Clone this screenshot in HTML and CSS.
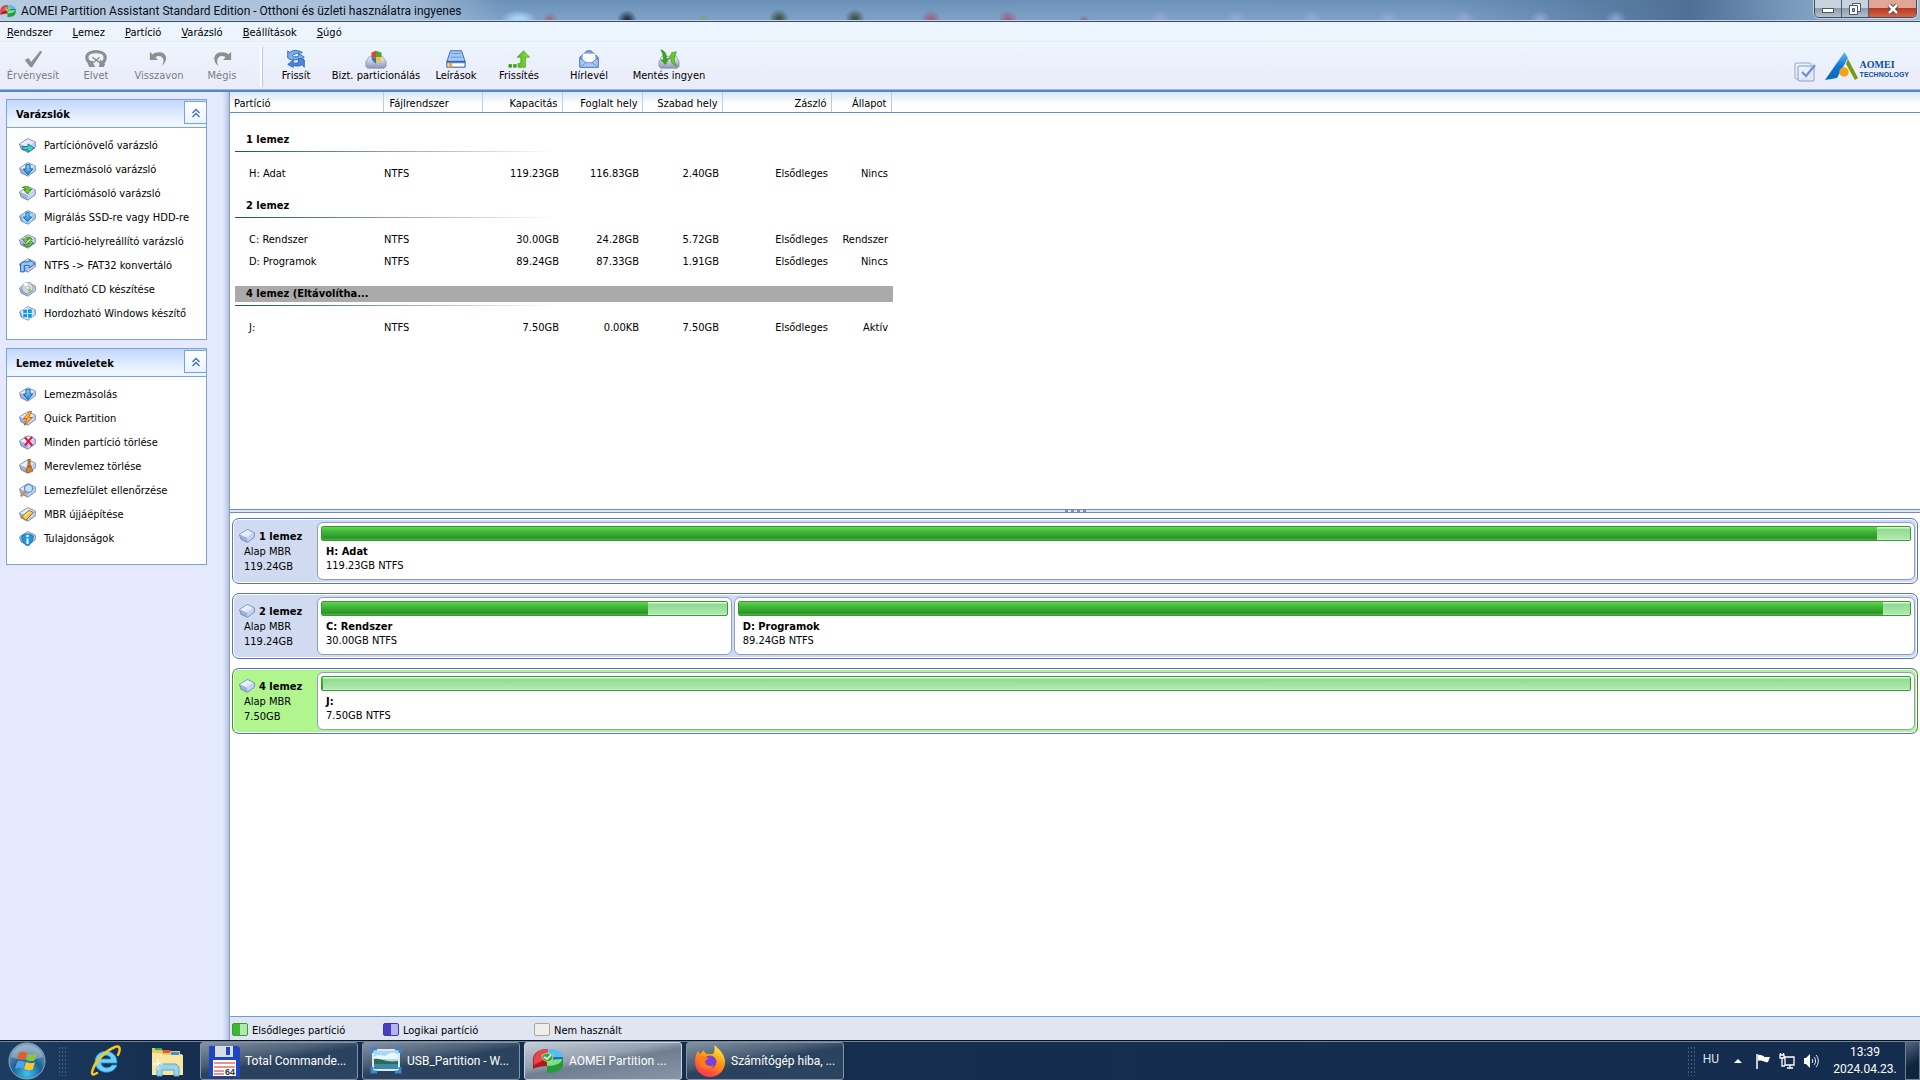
FILE: index.html
```html
<!DOCTYPE html>
<html lang="hu">
<head>
    <meta charset="UTF-8">
    <meta name="viewport" content="width=device-width, initial-scale=1.0">
    <title>AOMEI Partition Assistant Standard Edition</title>
    <link rel="stylesheet" href="styles.css">
</head>
<body>
    <!-- shared icon shapes -->
    <svg class="defs" aria-hidden="true">
        <defs>
            <linearGradient id="diskTop" x1="0" y1="0" x2="1" y2="1">
                <stop offset="0" stop-color="#ffffff"/>
                <stop offset="1" stop-color="#cddaf5"/>
            </linearGradient>
            <linearGradient id="blueArrow" x1="0" y1="0" x2="0" y2="1">
                <stop offset="0" stop-color="#8fd8ff"/>
                <stop offset="1" stop-color="#1a7fd0"/>
            </linearGradient>
            <linearGradient id="greenArrow" x1="0" y1="0" x2="1" y2="0">
                <stop offset="0" stop-color="#1e9a14"/>
                <stop offset="1" stop-color="#9be23c"/>
            </linearGradient>
            <linearGradient id="driveBox" x1="0" y1="0" x2="0" y2="1">
                <stop offset="0" stop-color="#eef0fa"/>
                <stop offset="1" stop-color="#8f96b8"/>
            </linearGradient>
            <radialGradient id="orb" cx=".5" cy=".85" r=".8">
                <stop offset="0" stop-color="#3fc4f0"/>
                <stop offset=".5" stop-color="#1b6196"/>
                <stop offset="1" stop-color="#7f9db5"/>
            </radialGradient>
            <linearGradient id="foxBody" x1=".8" y1="0" x2=".3" y2="1">
                <stop offset="0" stop-color="#fff44f"/>
                <stop offset=".45" stop-color="#ff980e"/>
                <stop offset="1" stop-color="#ff2d5a"/>
            </linearGradient>
            <linearGradient id="logoBlue" x1="0" y1="0" x2="0" y2="1">
                <stop offset="0" stop-color="#6bb8f2"/>
                <stop offset=".5" stop-color="#0a78d6"/>
                <stop offset="1" stop-color="#0868c4"/>
            </linearGradient>
            <symbol id="disk" viewBox="0 0 16 14">
                <path d="M.5 5.500 8.500.6l6.800 3.200v4.400L8.300 13.300 2 10.200z" fill="#9fb2dc" stroke="#6f84b8" stroke-width=".9" stroke-linejoin="round"/>
                <path d="M1 5.600 8.500 1.100l6.300 2.900-6.600 4.700z" fill="url(#diskTop)"/>
                <path d="M8.200 9v3.800l6.600-4.800V4.300z" fill="#c5d5f3"/>
            </symbol>
            <symbol id="pie" viewBox="0 0 32 26">
                <path d="M16 10v8C6 18 1 21 1 21V11C2 3 10 1 16 1z" fill="#b3161b"/>
                <path d="M16 10 2 17C0 7 6 1 16 1z" fill="#e8474b"/>
                <path d="M17 9V1c9 0 14 4 14 8 0 2-1 3-2 4z" fill="#4fc0f0"/>
                <path d="M31 9v7l-14-6v-1z" fill="#1c6fb5"/>
                <path d="M15 13v12c9 0 16-3 16-8v-6c-2 2-6 3-9 3z" fill="#249a3c"/>
                <path d="m15 12 15-1c0 4-6 7-15 7z" fill="#7ede84"/>
                <path d="m10 7 5-2 6 2c0 5-2 6-5 7-4-1-6-3-6-7z" fill="#3aa53a" stroke="#d5efc9" stroke-width=".7"/>
                <path d="m12 9 3 2 4-4" fill="none" stroke="#fff" stroke-width="1.700"/>
            </symbol>
            <symbol id="downArrow" viewBox="0 0 16 14">
                <use href="#disk" width="16" height="14"/>
                <path d="M6.500 2.500h4v4H13L8.500 12 4 6.500h2.500z" fill="url(#blueArrow)" stroke="#0f5fa5" stroke-width=".9"/>
            </symbol>
        </defs>
    </svg>

    <header class="titlebar">
        <svg class="title-icon" viewBox="0 0 32 26"><use href="#pie"/></svg>
        <h1>AOMEI Partition Assistant Standard Edition - Otthoni és üzleti használatra ingyenes</h1>
        <div class="window-buttons">
            <button class="wb" aria-label="Kis méret"><svg width="14" height="12" viewBox="0 0 14 12"><rect x="1.500" y="5.500" width="11" height="4" fill="#fff" stroke="#4a5568"/></svg></button>
            <button class="wb" aria-label="Előző méret"><svg width="14" height="12" viewBox="0 0 14 12"><path d="M4.500.5h8v8h-8z" fill="#fff" stroke="#4a5568"/><path d="M1.500 2.500h8v9h-8z" fill="#fff" stroke="#4a5568"/><path d="M4.500 5.500h2v3h-2z" fill="#9ab" stroke="#4a5568"/></svg></button>
            <button class="wb close" aria-label="Bezárás"><svg width="14" height="12" viewBox="0 0 14 12"><path d="m3 2 8 8m0-8-8 8" stroke="#4a3038" stroke-width="4.500"/><path d="m3 2 8 8m0-8-8 8" stroke="#fff" stroke-width="2.600"/></svg></button>
        </div>
    </header>

    <nav class="menubar">
        <button><u>R</u>endszer</button>
        <button><u>L</u>emez</button>
        <button><u>P</u>artíció</button>
        <button><u>V</u>arázsló</button>
        <button><u>B</u>eállítások</button>
        <button><u>S</u>úgó</button>
    </nav>

    <div class="toolbar">
        <button class="tool" disabled><svg viewBox="0 0 24 20"><path d="m3 11 4-2 3 4L20 1l2 1-11 17H9z" fill="#8f8f8f"/></svg>Érvényesít</button>
        <button class="tool narrow" disabled><svg viewBox="0 0 24 20"><path d="M9 14C3 14 2 11 2 8c0-4 5-6 10-6s10 2 10 6c0 3-1 6-5 6" fill="none" stroke="#8f8f8f" stroke-width="3.500"/><path d="M3 12 5 18h5l-2-3zM17 12l4 4-1 2h-4zM8 8l8 6m-7 0 7-6" fill="#8f8f8f" stroke="#8f8f8f" stroke-width="1.500"/></svg>Elvet</button>
        <button class="tool" disabled><svg viewBox="0 0 24 20"><path d="M2 2v9h9L8 8c6-4 12 1 7 10 9-8 4-17-5-15-2 0-4 1-5 2z" fill="#8f8f8f"/></svg>Visszavon</button>
        <button class="tool narrow" disabled><svg viewBox="0 0 24 20"><path d="M22 2v9h-9l3-3C10 4 4 9 8 18-1 10 5 1 14 3c2 0 4 1 5 2z" fill="#8f8f8f"/></svg>Mégis</button>
        <span class="tool-sep"></span>
        <button class="tool"><svg viewBox="0 0 24 20"><path d="M3 1v8c2 2 8 3 12 1v3l6-5-6-4v3c-3 1-6 1-7-1 2-2 6-2 11-3C14 0 8 0 5 3z" fill="#79aef0" stroke="#2c63bb"/><path d="M21 19v-8c-2-2-5-2-7-1l1 3c1 1-4 2-6 1v-3l-6 5 6 3v-2c4 1 8 1 10-1z" fill="#4a86de" stroke="#2c63bb"/></svg>Frissít</button>
        <button class="tool wide"><svg viewBox="0 0 24 20"><path d="M5 7h14l4 6v5l-2 2H3l-2-2v-5z" fill="url(#driveBox)" stroke="#7b84aa" stroke-width=".7"/><path d="M12 1 7 3v5h5z" fill="#e0452c"/><path d="m12 1 6 2v5h-6z" fill="#55a630"/><path d="M7 8h5v7C9 13 7 11 7 8z" fill="#2f74d0"/><path d="M12 8h6c0 3-3 6-6 7z" fill="#fbc02d"/></svg>Bizt. particionálás</button>
        <button class="tool"><svg viewBox="0 0 24 20"><path d="M6 1h12l4 12v6H2v-6z" fill="#a9c9f5" stroke="#2f62b5"/><path d="M7 4h10M6 8h12" stroke="#5b8fe0"/><path d="M2 13h20" stroke="#2f62b5" stroke-width="2"/><path d="M3 15h18v3H3z" fill="#fff"/><path d="M4 14h4v6l-2-2-2 2z" fill="#f4a52a"/></svg>Leírások</button>
        <button class="tool narrow"><svg viewBox="0 0 24 20"><path d="M1 16h3v3H1zM6 16h3v3H6zM11 15h3V8h-4l7-7 6.500 7H19v11h-8z" fill="url(#greenArrow)" stroke="#3d9f1c" stroke-width=".8"/></svg>Frissítés</button>
        <button class="tool mid"><svg viewBox="0 0 24 20"><path d="M2 8 10 1h4l8 7v11H2z" fill="#7ba5e2" stroke="#4a72b8"/><path d="M5 4h14v8l-7 4-7-4z" fill="#fff" stroke="#9bb4dc" stroke-width=".7"/><path d="m2 9 7 5h6l7-5v10H2z" fill="#a9c9f5" stroke="#4a72b8" stroke-width=".8"/><path d="m3 18 6-4m12 4-6-4" stroke="#6590d0"/></svg>Hírlevél</button>
        <button class="tool mid"><svg viewBox="0 0 24 20"><path d="M4 7h16l3 6v5l-2 2H3l-2-2v-5z" fill="url(#driveBox)" stroke="#8087a5" stroke-width=".7"/><path d="M3 0c5 1 7 6 6 10l3-1-4 7-5-5h3C6 7 5 3 3 0z" fill="#35a818" stroke="#237d10" stroke-width=".5"/><path d="M21 18c-6-2-7-5-7-9l-2 1 3-7 5-1-1 4c-2 4-1 9 2 12z" fill="#68c726" stroke="#237d10" stroke-width=".5"/></svg>Mentés ingyen</button>
        <div class="brand">
            <svg class="brand-check" viewBox="0 0 22 20"><rect x="1" y="1" width="16" height="16" rx="2" fill="none" stroke="#b0bfe2" stroke-width="1.500"/><rect x="4" y="4" width="16" height="15" rx="2" fill="#e9effa" fill-opacity=".7" stroke="#a5b6df" stroke-width="1.500"/><path d="m8 10 4 4 9-11" fill="none" stroke="#6f8fdb" stroke-width="2.200"/></svg>
            <svg class="brand-mark" viewBox="0 0 34 28"><path d="M20.500 0 24 6 13 26l-12 2z" fill="url(#logoBlue)"/><path d="m24 7 10 19-3 2L22 12z" fill="#749c0a"/><circle cx="20" cy="20" r="4.700" fill="#f9a30a"/></svg>
            <p class="brand-name"><b>AOMEI</b><span>TECHNOLOGY</span></p>
        </div>
    </div>

    <div class="workspace">
        <aside class="sidebar">
            <section class="box">
                <header class="box-head">
                    <h2>Varázslók</h2>
                    <button class="fold" aria-label="Összecsukás"><svg width="10" height="10" viewBox="0 0 10 10"><path d="m1.500 5 3.500-3.500L8.500 5m-7 4L5 5.500 8.500 9" fill="none" stroke="#3d6ea5" stroke-width="1.300"/></svg></button>
                </header>
                <div class="box-body">
                    <button class="task"><svg viewBox="0 0 16 14"><use href="#disk"/><path d="M3.500 8h5V5.500l6 4-6 4V11h-5z" fill="#35dcb0" stroke="#1c57a8" stroke-width=".8"/></svg>Partíciónövelő varázsló</button>
                    <button class="task"><svg viewBox="0 0 16 14"><use href="#downArrow"/></svg>Lemezmásoló varázsló</button>
                    <button class="task"><svg viewBox="0 0 16 14"><use href="#disk"/><path d="M3 1.500C6-.5 9 0 9.500 3H12L8 7.500 4.500 3.500h2C6.500 2 5 1.500 3 1.500z" fill="#6fd01c" stroke="#237d10" stroke-width=".8"/></svg>Partíciómásoló varázsló</button>
                    <button class="task"><svg viewBox="0 0 16 14"><use href="#disk"/><circle cx="8" cy="7" r="5.500" fill="#b8daf5" stroke="#6d9ccc" stroke-width=".7"/><path d="M6.500 2.500h3v4H12L8 11 4 6.500h2.500z" fill="url(#blueArrow)" stroke="#0f5fa5" stroke-width=".8"/></svg>Migrálás SSD-re vagy HDD-re</button>
                    <button class="task"><svg viewBox="0 0 16 14"><use href="#disk"/><path d="M12.500 5C10 1.500 6 2.500 5 5H3l3.500 3L9 5H7.500C8.500 4 10 4.500 12.500 5zM4 9.500c2 3.500 7 3 8-.5h2L11 6 8 9h2c-1 1.500-3 1.500-6 .5z" fill="#7ccd3a" stroke="#2e7d14" stroke-width=".8"/></svg>Partíció-helyreállító varázsló</button>
                    <button class="task"><svg viewBox="0 0 16 14"><use href="#disk"/><path d="M1.500 13V5.500L4 3.500h5.500V1.500L15 5.500l-5.500 4V7H5v6z" fill="#8dc8f5" stroke="#1c62ae" stroke-width=".9"/></svg>NTFS -&gt; FAT32 konvertáló</button>
                    <button class="task"><svg viewBox="0 0 16 14"><use href="#disk"/><circle cx="8" cy="5.500" r="5.300" fill="#d6d8d6" stroke="#8d9299" stroke-width=".8"/><path d="M8 5.500 4 1.500A5 5 0 0 1 8 .5z" fill="#fff"/><path d="m8 5.500 4.500 2.500a5 5 0 0 1-3 2.500z" fill="#8cbf8c"/><circle cx="8" cy="5.500" r="1.500" fill="#fff" stroke="#999" stroke-width=".6"/></svg>Indítható CD készítése</button>
                    <button class="task"><svg viewBox="0 0 16 14"><use href="#disk"/><circle cx="8" cy="7" r="5.500" fill="#cfeafc"/><path d="M4 3.500h3.500v3H4zM8.500 3H12v3.500H8.500zM4 7.500h3.500v3H4zM8.500 7.500H12V11H8.500z" fill="#0a9be8"/></svg>Hordozható Windows készítő</button>
                </div>
            </section>

            <section class="box">
                <header class="box-head">
                    <h2>Lemez műveletek</h2>
                    <button class="fold" aria-label="Összecsukás"><svg width="10" height="10" viewBox="0 0 10 10"><path d="m1.500 5 3.500-3.500L8.500 5m-7 4L5 5.500 8.500 9" fill="none" stroke="#3d6ea5" stroke-width="1.300"/></svg></button>
                </header>
                <div class="box-body">
                    <button class="task"><svg viewBox="0 0 16 14"><use href="#downArrow"/></svg>Lemezmásolás</button>
                    <button class="task"><svg viewBox="0 0 16 14"><use href="#disk"/><path d="M10.500 0 4 7h3.500L5 13.500 12.500 6H9l3-6z" fill="#ffc02e" stroke="#d2560c" stroke-width=".9"/></svg>Quick Partition</button>
                    <button class="task"><svg viewBox="0 0 16 14"><use href="#disk"/><path d="m5.500 2 7 8m0-8.500-7 8.500" stroke="#e3163c" stroke-width="2"/></svg>Minden partíció törlése</button>
                    <button class="task"><svg viewBox="0 0 16 14"><use href="#disk"/><path d="M8.500 0h2v5l2.500 6.500-5 1.500-1.500-2.500 2-5z" fill="#c9882e" stroke="#8d5312" stroke-width=".7"/><path d="m8 7.500 3.500-1" stroke="#d8402a" stroke-width="1.300"/></svg>Merevlemez törlése</button>
                    <button class="task"><svg viewBox="0 0 16 14"><use href="#disk"/><path d="M6.500 7.500 1.500 12.500" stroke="#e08a2c" stroke-width="2.200"/><circle cx="9" cy="5" r="3.800" fill="#bfe3fb" stroke="#5b8fd0" stroke-width="1.200"/></svg>Lemezfelület ellenőrzése</button>
                    <button class="task"><svg viewBox="0 0 16 14"><use href="#disk"/><path d="m2.500 9 7-6 4 2-7 7.500z" fill="#f6c945" stroke="#97660f" stroke-width=".9"/><path d="m5 8.500 5-4" stroke="#fff0a8"/></svg>MBR újjáépítése</button>
                    <button class="task"><svg viewBox="0 0 16 14"><use href="#disk"/><path d="M2.500 4.500C5 2 11 2 13.500 4.500c0 5-2 8-5.500 9.500-3.500-1.500-5.500-4.500-5.500-9.500z" fill="#2196dc" stroke="#1168b0" stroke-width=".7"/><path d="M8 7v5" stroke="#fff" stroke-width="2"/><circle cx="8" cy="4.700" r="1.200" fill="#fff"/></svg>Tulajdonságok</button>
                </div>
            </section>
        </aside>

        <main class="content">
            <div class="list-pane">
                <table class="partitions">
                    <colgroup>
                        <col class="c-name"><col class="c-fs"><col class="c-size"><col class="c-size"><col class="c-size"><col class="c-flag"><col class="c-state"><col>
                    </colgroup>
                    <thead>
                        <tr><th>Partíció</th><th>Fájlrendszer</th><th class="num">Kapacitás</th><th class="num">Foglalt hely</th><th class="num">Szabad hely</th><th class="num">Zászló</th><th class="num">Állapot</th><th></th></tr>
                    </thead>
                    <tbody>
                        <tr class="group"><td colspan="7"><div>1 lemez</div></td><td></td></tr>
                        <tr><td>H: Adat</td><td>NTFS</td><td class="num">119.23GB</td><td class="num">116.83GB</td><td class="num">2.40GB</td><td class="num">Elsődleges</td><td class="num">Nincs</td><td></td></tr>
                        <tr class="group"><td colspan="7"><div>2 lemez</div></td><td></td></tr>
                        <tr><td>C: Rendszer</td><td>NTFS</td><td class="num">30.00GB</td><td class="num">24.28GB</td><td class="num">5.72GB</td><td class="num">Elsődleges</td><td class="num">Rendszer</td><td></td></tr>
                        <tr><td>D: Programok</td><td>NTFS</td><td class="num">89.24GB</td><td class="num">87.33GB</td><td class="num">1.91GB</td><td class="num">Elsődleges</td><td class="num">Nincs</td><td></td></tr>
                        <tr class="group selected"><td colspan="7"><div>4 lemez (Eltávolítha...</div></td><td></td></tr>
                        <tr><td>J:</td><td>NTFS</td><td class="num">7.50GB</td><td class="num">0.00KB</td><td class="num">7.50GB</td><td class="num">Elsődleges</td><td class="num">Aktív</td><td></td></tr>
                    </tbody>
                </table>
            </div>

            <div class="splitter"><i></i><i></i><i></i><i></i></div>

            <div class="disk-map">
                <section class="disk">
                    <div class="disk-info">
                        <h3><svg viewBox="0 0 16 14"><use href="#disk"/></svg>1 lemez</h3>
                        <p>Alap MBR</p>
                        <p>119.24GB</p>
                    </div>
                    <div class="part" style="flex-grow: 100">
                        <div class="bar"><div class="used" style="width: 97.900%"></div></div>
                        <h4>H: Adat</h4>
                        <p>119.23GB NTFS</p>
                    </div>
                </section>
                <section class="disk">
                    <div class="disk-info">
                        <h3><svg viewBox="0 0 16 14"><use href="#disk"/></svg>2 lemez</h3>
                        <p>Alap MBR</p>
                        <p>119.24GB</p>
                    </div>
                    <div class="part" style="flex-grow: 26">
                        <div class="bar"><div class="used" style="width: 80.500%"></div></div>
                        <h4>C: Rendszer</h4>
                        <p>30.00GB NTFS</p>
                    </div>
                    <div class="part" style="flex-grow: 75">
                        <div class="bar"><div class="used" style="width: 97.700%"></div></div>
                        <h4>D: Programok</h4>
                        <p>89.24GB NTFS</p>
                    </div>
                </section>
                <section class="disk active">
                    <div class="disk-info">
                        <h3><svg viewBox="0 0 16 14"><use href="#disk"/></svg>4 lemez</h3>
                        <p>Alap MBR</p>
                        <p>7.50GB</p>
                    </div>
                    <div class="part" style="flex-grow: 100">
                        <div class="bar"><div class="used" style="width: 1px"></div></div>
                        <h4>J:</h4>
                        <p>7.50GB NTFS</p>
                    </div>
                </section>
            </div>

            <footer class="legend">
                <span><i class="sw primary"></i>Elsődleges partíció</span>
                <span><i class="sw logical"></i>Logikai partíció</span>
                <span><i class="sw unused"></i>Nem használt</span>
            </footer>
        </main>
    </div>

    <footer class="taskbar">
        <button class="start" aria-label="Start">
            <svg viewBox="0 0 38 38"><circle cx="19" cy="19" r="18" fill="url(#orb)" stroke="#8ba9be"/><path d="M3 15C7-1 31-1 35 15c-10 4-22 4-32 0z" fill="#dce8f0" opacity=".35"/><path d="M11 11c3-2 6-1 8 0l-2 7c-3-1-5-2-8 0z" fill="#ee5a24"/><path d="M20 12c3 1 6 1 9-1l-2 7c-3 2-6 1-9 0z" fill="#8cc63e"/><path d="M9 20c3-2 5-1 8 0l-2 7c-2-1-5-2-8 0z" fill="#4aa5e8"/><path d="M18 20c3 1 6 2 9 0l-2 7c-3 2-6 1-9 0z" fill="#fdc52e"/></svg>
        </button>
        <span class="grip"></span>
        <button class="pinned" aria-label="Internet Explorer">
            <svg viewBox="0 0 32 32"><path d="M27 18H11c1 6 9 6 11 2h5c-4 11-21 9-22-3C5 3 27 2 27 18zm-6-4c-1-5-9-5-10 0z" fill="#6fd0fa" stroke="#2795da" stroke-width=".8" fill-rule="evenodd"/><path d="M7 28c-5 3-6 1-4-4C6 15 17 5 25 2c5-2 6 2 3 8" fill="none" stroke="#f8c81c" stroke-width="2.500" stroke-linecap="round"/></svg>
        </button>
        <button class="pinned" aria-label="Intéző">
            <svg viewBox="0 0 32 32"><path d="M1 3h9l2 3h17v3h2v21H1z" fill="#e6c765"/><path d="M4 3h7v2H4z" fill="#2db14a"/><path d="M12 5h7v3h-7z" fill="#e8552e"/><path d="M20 7h8v3h-8z" fill="#3b8fe0"/><path d="M1 8h9l2 2h20v20H1z" fill="#f7e6a0"/><path d="M6 31v-9l3-3h16l3 3v9h-5v-6H11v6z" fill="#9ad4ee" stroke="#5aa7cf"/><path d="M7 13v12M2 19h10" stroke="#fff"/></svg>
        </button>
        <div class="windows">
            <button class="win">
                <svg viewBox="0 0 32 32"><path d="M1 1h29l2 2v29H1z" fill="#1d46c0"/><path d="M7 1h18v11H7z" fill="#d9dde6"/><path d="M18 2h4v8h-4z" fill="#1d46c0"/><path d="M5 15h23v16H5z" fill="#fff"/><path d="M6 18h21M6 22h21M6 26h10M6 29h10" stroke="#d8232a"/><text x="17" y="30" class="floppy-text">64</text></svg>
                Total Commande...
            </button>
            <button class="win">
                <svg viewBox="0 0 32 32"><path d="M3 5h26v20H3z" fill="#a8d8f5" stroke="#dbe9f2" stroke-width="2"/><path d="M4 12c6-5 9 1 13-2s8-3 11 0v4H4z" fill="#eaf7ff"/><path d="M4 14c7-1 12 4 24 2v4H4z" fill="#2e6b52"/><path d="M4 19h24v5H4z" fill="#3d8aa8"/><path d="M2 8V4h5M25 4h5v4M2 22v5h5M25 27h5v-5" fill="none" stroke="#3b86c8" stroke-width="3"/></svg>
                USB_Partition - W...
            </button>
            <button class="win current">
                <svg viewBox="0 0 32 26"><use href="#pie"/></svg>
                AOMEI Partition ...
            </button>
            <button class="win">
                <svg viewBox="0 0 32 32"><path d="M20 0c7 5 11 11 11 17 0 8-6 15-15 15S1 25 1 17c0-5 1-8 3-11l2 3 4-4c0 2 1 3 3 4h6c2-3 2-6 1-9z" fill="url(#foxBody)"/><circle cx="16" cy="17" r="6.500" fill="#7a3fd8"/><path d="M5 12c5-2 8 0 10 2-3 0-4 2-4 3 1 4 6 5 9 3-2 5-12 6-15-1z" fill="#ff7a18"/></svg>
                Számítógép hiba, ...
            </button>
        </div>
        <div class="tray">
            <span class="grip"></span>
            <span class="lang">HU</span>
            <svg class="up" width="8" height="4" viewBox="0 0 8 4"><path d="m0 4 4-4 4 4z" fill="#fff"/></svg>
            <svg width="16" height="16" viewBox="0 0 16 16"><path d="M2 1v15" stroke="#fff" stroke-width="1.500"/><path d="M3 2c3-1 4 1 6 1v1h6l-2 5c-2 1-4-1-5-1s-3-1-5 0z" fill="#fff"/></svg>
            <svg width="16" height="16" viewBox="0 0 16 16"><path d="M6 4h9v8H6zM8 15h6m-3-3v3M3 5v8h3M1 2h4v3H1zM1.500 0v2m3-2v2" fill="none" stroke="#fff" stroke-width="1.300"/></svg>
            <svg width="16" height="16" viewBox="0 0 16 16"><path d="M1 5h2l4-4v14l-4-4H1z" fill="#fff"/><path d="M9 6c1 1 1 3 0 4m2-6c2 2 2 6 0 8m2-10c3 3 3 9 0 12" fill="none" stroke="#e8eef5"/></svg>
            <time class="clock"><span>13:39</span><span>2024.04.23.</span></time>
            <button class="show-desktop" aria-label="Asztal megjelenítése"></button>
        </div>
    </footer>
</body>
</html>
```
FILE: styles.css
```css
* {
    box-sizing: border-box;
}

body {
    margin: 0;
    height: 100vh;
    display: flex;
    flex-direction: column;
    overflow: hidden;
    font-family: 'DejaVu Sans Condensed', 'DejaVu Sans', sans-serif;
    font-size: 11px;
    line-height: 15px;
    color: #000;
    background: #fff;
}

h1, h2, h3, h4, p {
    margin: 0;
    font-size: 11px;
}

button {
    margin: 0;
    padding: 0;
    border: none;
    background: none;
    font: inherit;
    color: inherit;
}

.defs {
    position: absolute;
    width: 0;
    height: 0;
}

/* title bar */
.titlebar {
    display: flex;
    align-items: flex-start;
    height: 22px;
    flex: none;
    border-bottom: 1px solid #3d4d66;
    box-shadow: inset 0 -1px #c3d5e8;
    background:
        radial-gradient(ellipse 18px 10px at 519px 20px, #a9d0f5 30%, transparent),
        radial-gradient(circle 8px at 550px 20px, #a2667f, transparent),
        radial-gradient(circle 10px at 627px 20px, #26364a 20%, transparent),
        radial-gradient(circle 7px at 703px 20px, #7aa57e, transparent),
        radial-gradient(circle 10px at 779px 19px, #46564f 20%, transparent),
        radial-gradient(circle 10px at 855px 19px, #46564f 20%, transparent),
        radial-gradient(circle 10px at 931px 20px, #a05a78, transparent),
        radial-gradient(circle 10px at 1008px 20px, #a05a78, transparent),
        radial-gradient(circle 6px at 1084px 21px, #a05a78, transparent),
        radial-gradient(circle 11px at 1160px 21px, #9aa9dc, transparent),
        radial-gradient(circle 11px at 1236px 21px, #9aa9dc, transparent),
        radial-gradient(circle 11px at 1312px 21px, #9aa9dc, transparent),
        radial-gradient(circle 11px at 1388px 21px, #9aa9dc, transparent),
        radial-gradient(circle 11px at 1464px 21px, #9aa9dc, transparent),
        radial-gradient(circle 11px at 1540px 21px, #9aa9dc, transparent),
        radial-gradient(circle 11px at 1616px 21px, #9aa9dc, transparent),
        linear-gradient(90deg, rgba(200, 216, 234, .8), rgba(190, 208, 228, .7) 400px, transparent 500px),
        linear-gradient(90deg, transparent 75%, #4e7097 88%, #7f9fc0 94%, #a5bcd3),
        linear-gradient(#6c92b9, #7fa2c8);
}

.title-icon {
    width: 16px;
    height: 14px;
    margin: 4px 5px 0 0;
}

.titlebar h1 {
    flex: 1;
    font: 12px/22px 'Roboto', sans-serif;
    color: #0a0f18;
}

.window-buttons {
    display: flex;
    height: 18px;
    margin-right: 3px;
    border: 1px solid #3f4d60;
    border-top: none;
    border-radius: 0 0 5px 5px;
    overflow: hidden;
    box-shadow: 0 0 0 1px rgba(255, 255, 255, .5);
}

.wb {
    width: 27px;
    display: flex;
    align-items: center;
    justify-content: center;
    border-right: 1px solid #4a5a70;
    background: linear-gradient(#c9d3de 45%, #8c9cae 50%, #b3c0cd);
}

.wb.close {
    width: 47px;
    border-right: none;
    background: linear-gradient(#e0a698 45%, #b93a22 50%, #d0644a);
}

/* menu */
.menubar {
    display: flex;
    flex: none;
    gap: 20px;
    height: 20px;
    padding: 2px 0 0 7px;
    background: #ecf4fd;
    border-bottom: 1px solid #e8edf3;
}

/* toolbar */
.toolbar {
    display: flex;
    flex: none;
    height: 50px;
    padding-top: 6px;
    background: linear-gradient(#ecf5fd, #ebebf9);
    border-bottom: 2px solid #4a8ad0;
    border-top: 1px solid #f4f7fc;
    box-shadow: inset 0 -1px #a9b6cd;
}

.tool {
    display: flex;
    flex-direction: column;
    align-items: center;
    width: 66px;
    line-height: 14px;
    white-space: nowrap;
}

.tool.narrow {
    width: 60px;
}

.tool.mid {
    width: 80px;
}

.tool.wide {
    width: 94px;
}

.tool svg {
    width: 22px;
    height: 20px;
}

.tool:disabled {
    color: #7b7b80;
}

.tool-sep {
    width: 3px;
    height: 40px;
    margin: -2px 0 0 8px;
    background: #fff;
    border-right: 1px solid #bcc8de;
}

.brand {
    display: flex;
    align-items: flex-start;
    margin-left: auto;
    padding: 3px 11px 0 0;
}

.brand-check {
    width: 22px;
    height: 20px;
    margin: 10px 8px 0 0;
}

.brand-mark {
    width: 34px;
    height: 28px;
}

.brand-name {
    display: flex;
    flex-direction: column;
    padding: 7px 0 0 2px;
    color: #0b4da2;
}

.brand-name b {
    font: bold 10px/11px 'Liberation Serif', serif;
}

.brand-name span {
    font: bold 7px/9px 'Liberation Sans', sans-serif;
}

/* layout under the toolbar */
.workspace {
    display: flex;
    flex: 1;
    min-height: 0;
}

.sidebar {
    display: flex;
    flex-direction: column;
    flex: none;
    gap: 8px;
    width: 230px;
    padding: 7px 23px 0 6px;
    background: linear-gradient(90deg, #e4e9fd 222px, #ccd8f0 226px, #b3c1e1 229px, #8a9bc8 229px);
}

.box {
    border: 1px solid #7da2d6;
}

.box-head {
    display: flex;
    justify-content: space-between;
    height: 28px;
    border-bottom: 1px solid #7da2d6;
    background: linear-gradient(#c2d7fe, #edf5fe 80%);
}

.box-head h2 {
    padding-left: 9px;
    line-height: 29px;
}

.fold {
    display: flex;
    align-items: center;
    justify-content: center;
    width: 22px;
    height: 23px;
    margin-top: 1px;
    border: 1px solid #7da2d6;
    border-width: 1px 0 1px 1px;
    background: linear-gradient(#fff, #e9f3fd);
}

.box-body {
    display: flex;
    flex-direction: column;
    padding: 5px 0 14px 12px;
    background: #fff;
}

.task {
    display: flex;
    align-items: center;
    gap: 8px;
    height: 24px;
    text-align: left;
    white-space: nowrap;
}

.task svg {
    width: 17px;
    height: 15px;
}

.content {
    display: flex;
    flex-direction: column;
    flex: 1;
    min-width: 0;
}

/* partition table */
.list-pane {
    flex: none;
    height: 417px;
    background: #fff;
}

.partitions {
    width: 100%;
    table-layout: fixed;
    border-collapse: collapse;
}

.c-name {
    width: 153px;
}

.c-fs {
    width: 99px;
}

.c-size {
    width: 80px;
}

.c-flag {
    width: 109px;
}

.c-state {
    width: 60px;
}

.partitions th {
    height: 20px;
    padding: 4px 4px 0;
    line-height: 16px;
    text-align: left;
    font-weight: normal;
    border-bottom: 1px solid #5c92d0;
    border-right: 1px solid #b5cdec;
    background: linear-gradient(#d9e5f5, #fff 60%);
}

.partitions th:nth-child(2) {
    padding-left: 6px;
}

.partitions th:last-child {
    border-right: none;
}

.partitions th.num,
.partitions td.num {
    text-align: right;
}

.partitions tbody::before {
    content: '';
    display: block;
    height: 5px;
}

.partitions td {
    height: 22px;
    padding: 0 3px 0 1px;
}

.partitions td:first-child {
    padding-left: 19px;
}

.partitions .group td {
    height: 44px;
    padding: 4px 0 0 5px;
    vertical-align: middle;
}

.group div {
    margin-right: -2px;
    padding-left: 11px;
    line-height: 16px;
    font-weight: bold;
}

.group td:first-child::after {
    content: '';
    display: block;
    width: 320px;
    height: 1px;
    margin-top: 3px;
    background: linear-gradient(90deg, #1c4b80, #fff);
}

.group.selected div {
    background: #aaa;
}

.splitter {
    display: flex;
    flex: none;
    justify-content: center;
    gap: 3px;
    height: 4px;
    border: 1px solid #7189c6;
    border-width: 1px 0;
    background: #dde6f8;
}

.splitter i {
    width: 3px;
    height: 2px;
    background: #7e8fb8;
}

/* graphical disk map */
.disk-map {
    display: flex;
    flex-direction: column;
    flex: 1;
    gap: 9px;
    padding: 5px 2px 0;
    background: #fff;
}

.disk {
    display: flex;
    gap: 2px;
    height: 66px;
    padding: 3px 2px;
    border: 1px solid #5676b8;
    border-radius: 7px;
    background: #d0daf0;
    box-shadow: inset 0 0 0 1px #fff;
}

.disk.active {
    border-left-color: #4a8f20;
    border-right-color: #4a8f20;
    background: #b1f58f;
}

.disk-info {
    flex: none;
    width: 80px;
    padding: 7px 0 0 9px;
}

.disk-info h3 {
    display: flex;
    gap: 4px;
    margin-left: -5px;
    line-height: 15px;
}

.disk-info svg {
    width: 16px;
    height: 14px;
}

.part {
    flex: 1 1 0;
    min-width: 0;
    height: 58px;
    padding: 3px;
    border: 1px solid #8f9cc4;
    border-radius: 6px;
    background: #fff;
}

.bar {
    height: 15px;
    margin-bottom: 3px;
    border: 1px solid #35a029;
    border-radius: 2px;
    background: linear-gradient(#d9f5d9 1px, #8edb8e 2px, #b0e8b0 12px, #d9f5d9);
}

.used {
    height: 13px;
    background: linear-gradient(#63d355, #3eb636 5px, #2f922b 11px, #48bd3e);
}

.part h4,
.part p {
    padding-left: 5px;
    line-height: 14px;
}

.part h4 {
    line-height: 15px;
}

.legend {
    display: flex;
    flex: none;
    height: 24px;
    padding: 5px 0 0 2px;
    border-top: 1px solid #63a0dc;
    background: #dfe6f1;
}

.legend span {
    display: flex;
    gap: 4px;
    width: 151px;
    line-height: 17px;
}

.sw {
    width: 16px;
    height: 13px;
    margin-top: 1px;
    border: 1px solid;
    border-radius: 2px;
}

.sw.primary {
    border-color: #35a029;
    background: linear-gradient(90deg, #3eb636 50%, #b0e8b0 50%);
}

.sw.logical {
    border-color: #4038a8;
    background: linear-gradient(90deg, #4540c0 50%, #b4b4ee 50%);
}

.sw.unused {
    border-color: #b3a58c;
    background: #eee;
}

/* taskbar */
.taskbar {
    display: flex;
    align-items: center;
    flex: none;
    height: 40px;
    padding-left: 8px;
    border-top: 1px solid #07111f;
    box-shadow: inset 0 1px #6f86a0;
    background: linear-gradient(90deg, #1c3d60, #152e50 160px, #142c4d);
    font: 12px/16px 'Roboto', sans-serif;
    color: #fff;
}

.start svg {
    display: block;
    width: 38px;
    height: 38px;
}

.grip {
    width: 8px;
    height: 30px;
    margin-left: 12px;
    background: radial-gradient(circle 1px, #4a6078 90%, transparent) 0 0 / 3px 4px;
}

.pinned svg {
    display: block;
    width: 32px;
    height: 32px;
}

.pinned {
    margin-left: 24px;
}

.pinned + .pinned {
    margin-left: 29px;
}

.windows {
    display: flex;
    gap: 4px;
    margin-left: 17px;
}

.win {
    display: flex;
    align-items: center;
    gap: 5px;
    width: 158px;
    height: 38px;
    padding-left: 7px;
    text-align: left;
    white-space: nowrap;
    border: 1px solid #8494a6;
    border-radius: 3px;
    background: linear-gradient(170deg, #8392a3, #4d6077 35%, #2a425e 50%, #2b4460);
}

.win svg {
    width: 32px;
    height: 32px;
}

.win.current {
    border-color: #c9d2db;
    background: linear-gradient(170deg, #c5cdd5, #94a1b0 40%, #6f7f92 52%, #8796a7);
}

.floppy-text {
    font: bold 9px 'Liberation Sans', sans-serif;
    fill: #333;
}

.tray {
    display: flex;
    align-items: center;
    gap: 8px;
    height: 100%;
    margin-left: auto;
}

.tray .grip {
    margin: 0;
}

.lang {
    margin: -4px 7px 0 0;
    color: #dfe6ee;
}

.up {
    margin-right: 5px;
}

.clock {
    display: flex;
    flex-direction: column;
    width: 64px;
    margin-left: 6px;
    text-align: center;
    line-height: 17px;
}

.show-desktop {
    width: 15px;
    height: 39px;
    border: 1px solid #6d8198;
    background: linear-gradient(150deg, #53677f, #10243f 60%);
}
```
